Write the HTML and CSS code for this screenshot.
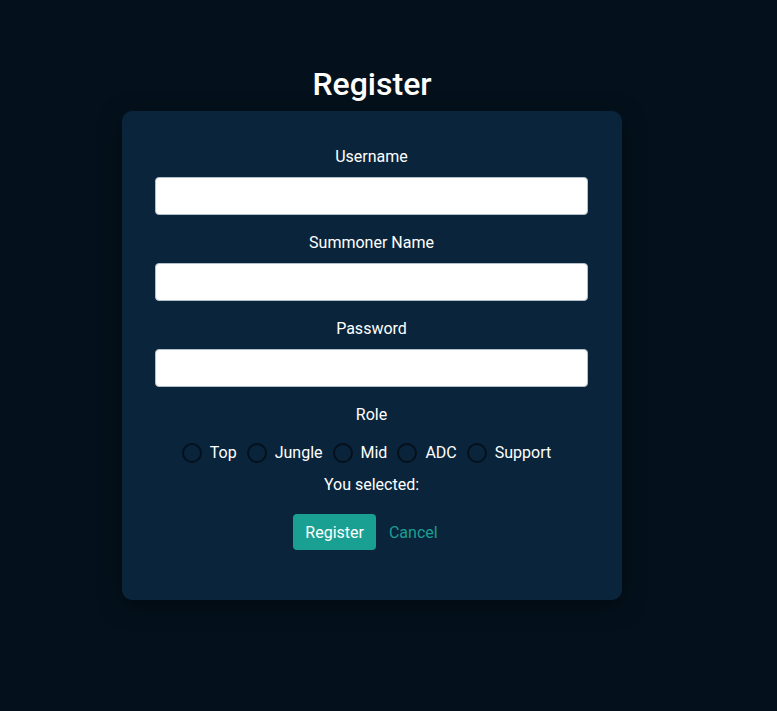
FILE: index.html
```
<!DOCTYPE html>
<html>
<head>
<meta charset="utf-8">
<link rel="stylesheet" href="styles.css">
</head>
<body>
<main class="page">
  <h1 class="title">Register</h1>
  <form class="card">
    <label class="label" for="u">Username</label>
    <input class="field" id="u" type="text">
    <label class="label" for="s">Summoner Name</label>
    <input class="field" id="s" type="text">
    <label class="label" for="p">Password</label>
    <input class="field" id="p" type="password">
    <div class="label">Role</div>
    <div class="roles">
      <label class="role"><span class="radio"></span>Top</label>
      <label class="role"><span class="radio"></span>Jungle</label>
      <label class="role"><span class="radio"></span>Mid</label>
      <label class="role"><span class="radio"></span>ADC</label>
      <label class="role"><span class="radio"></span>Support</label>
    </div>
    <div class="selected">You selected:</div>
    <div class="actions">
      <button class="btn primary" type="button">Register</button>
      <button class="btn link" type="button">Cancel</button>
    </div>
  </form>
</main>
</body>
</html>
```
FILE: styles.css
```
* { box-sizing: border-box; }
html, body { margin: 0; height: 100%; }
body {
  background: #04111c;
  font-family: Roboto, "Liberation Sans", sans-serif;
  color: #ffffff;
  font-size: 16px;
}
.page {
  display: flex;
  flex-direction: column;
  align-items: center;
  padding-top: 65px;
  padding-right: 33px;
}
.title {
  margin: 0 0 8px;
  font-size: 32px;
  line-height: 38px;
  font-weight: 500;
}
.card {
  width: 500px;
  background: #0a253b;
  border-radius: 10px;
  box-shadow: 0 6px 24px rgba(0, 0, 0, 0.45);
  padding: 34px 34px 50px 33px;
  display: flex;
  flex-direction: column;
  align-items: stretch;
}
.label {
  text-align: center;
  line-height: 24px;
  margin-bottom: 8px;
}
.field {
  display: block;
  width: 100%;
  height: 38px;
  border: 1px solid #b4bec8;
  border-radius: 4px;
  background: #ffffff;
  margin: 0 0 15px;
  font: inherit;
  padding: 6px 10px;
}
.field + .label { margin-top: 1px; }
.roles {
  display: flex;
  justify-content: center;
  margin-top: 6px;
  line-height: 24px;
}
.role {
  display: flex;
  align-items: center;
  margin-right: 10px;
}
.radio {
  width: 20px;
  height: 20px;
  border-radius: 50%;
  border: 2px solid #04111c;
  margin-right: 8px;
}
.selected {
  text-align: center;
  line-height: 24px;
  margin-top: 8px;
}
.actions {
  display: flex;
  justify-content: center;
  gap: 1px;
  margin-top: 17px;
}
.btn {
  font: inherit;
  height: 36px;
  padding: 0 12px;
  border: none;
  border-radius: 4px;
  background: transparent;
  cursor: pointer;
}
.primary {
  background: #1a9f93;
  color: #ffffff;
}
.link {
  color: #1a9f93;
}
```
